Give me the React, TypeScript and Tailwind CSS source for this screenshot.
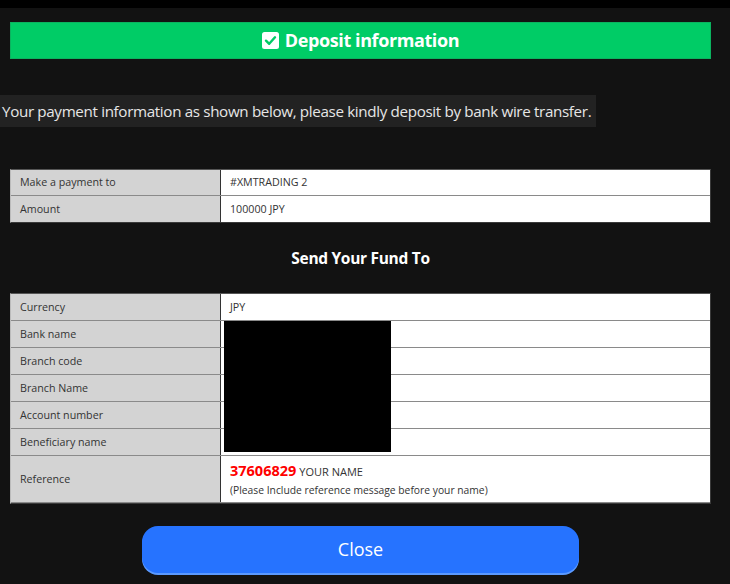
import React from "react";

const font = { fontFamily: "'Open Sans', 'Noto Sans', sans-serif" };

function Row({ label, children, tall }: { label: string; children?: React.ReactNode; tall?: boolean }) {
  return (
    <div className={`flex ${tall ? "h-[47px]" : "h-[27px]"} border-b border-[#8a8a8a] last:border-b-0`}>
      <div className="w-[210px] shrink-0 bg-[#d3d3d3] border-r border-[#333] flex items-center pl-[9px] text-[10.7px] text-[#333]">
        {label}
      </div>
      <div className="flex-1 bg-white flex items-center pl-[9px] text-[10.7px] text-[#333]">{children}</div>
    </div>
  );
}

export default function App() {
  return (
    <div className="w-[730px] h-[584px] bg-[#121212] overflow-hidden" style={font}>
      <div className="h-[8px] bg-black" />
      <div className="ml-[10px] w-[701px] mt-[14px] h-[37px] bg-[#00cc66] border border-[#0bb35f] flex items-center justify-center gap-[6px]">
        <svg width="17" height="17" viewBox="0 0 17 17">
          <rect x="0" y="0" width="17" height="17" rx="2.5" fill="#fff" />
          <path d="M4 8.7 L7.2 11.8 L13 5.3" stroke="#00cc66" strokeWidth="2.4" fill="none" strokeLinecap="round" strokeLinejoin="round" />
        </svg>
        <span className="text-white font-bold text-[18px] tracking-[-0.4px]">Deposit information</span>
      </div>
      <div className="mt-[36px] inline-flex h-[32px] items-center bg-[#222222] pl-[2px] pr-[5px] text-[15.2px] text-[#e6e6e6] tracking-[-0.35px]">
        Your payment information as shown below, please kindly deposit by bank wire transfer.
      </div>
      <div className="ml-[10px] w-[701px] mt-[42px] border border-[#3a3a3a] border-t-[#555] border-l-[#bbb]">
        <div className="flex h-[26px] border-b border-[#8a8a8a]">
          <div className="w-[210px] shrink-0 bg-[#d3d3d3] border-r border-[#333] flex items-center pl-[9px] text-[10.7px] text-[#333]">Make a payment to</div>
          <div className="flex-1 bg-white flex items-center pl-[9px] text-[10.7px] text-[#333]">#XMTRADING 2</div>
        </div>
        <div className="flex h-[26px]">
          <div className="w-[210px] shrink-0 bg-[#d3d3d3] border-r border-[#333] flex items-center pl-[9px] text-[10.7px] text-[#333]">Amount</div>
          <div className="flex-1 bg-white flex items-center pl-[9px] text-[10.7px] text-[#333]">100000 JPY</div>
        </div>
      </div>
      <div className="ml-[10px] w-[701px] mt-[24px] text-center text-white font-bold text-[15.5px] tracking-[-0.3px]">Send Your Fund To</div>
      <div className="relative ml-[10px] w-[701px] mt-[23px] border border-[#3a3a3a] border-t-[#555] border-l-[#bbb]">
        <Row label="Currency">JPY</Row>
        <Row label="Bank name"></Row>
        <Row label="Branch code"></Row>
        <Row label="Branch Name"></Row>
        <Row label="Account number"></Row>
        <Row label="Beneficiary name"></Row>
        <Row label="Reference" tall>
          <div className="flex flex-col">
            <div className="flex items-baseline gap-[3px]">
              <span className="text-[#ff0000] font-bold text-[14.5px]">37606829</span>
              <span className="text-[11px] text-[#333]">YOUR NAME</span>
            </div>
            <span className="text-[10.3px] text-[#333] mt-[1px]">(Please Include reference message before your name)</span>
          </div>
        </Row>
        <div className="absolute left-[213px] top-[27px] w-[167px] h-[131px] bg-black" />
      </div>
      <div className="ml-[10px] w-[701px] flex justify-center mt-[22px]">
        <button className="w-[437px] h-[47px] rounded-[16px] bg-[#2673ff] text-white text-[18px] shadow-[0_2px_0_#5b9aff]">
          Close
        </button>
      </div>
    </div>
  );
}
